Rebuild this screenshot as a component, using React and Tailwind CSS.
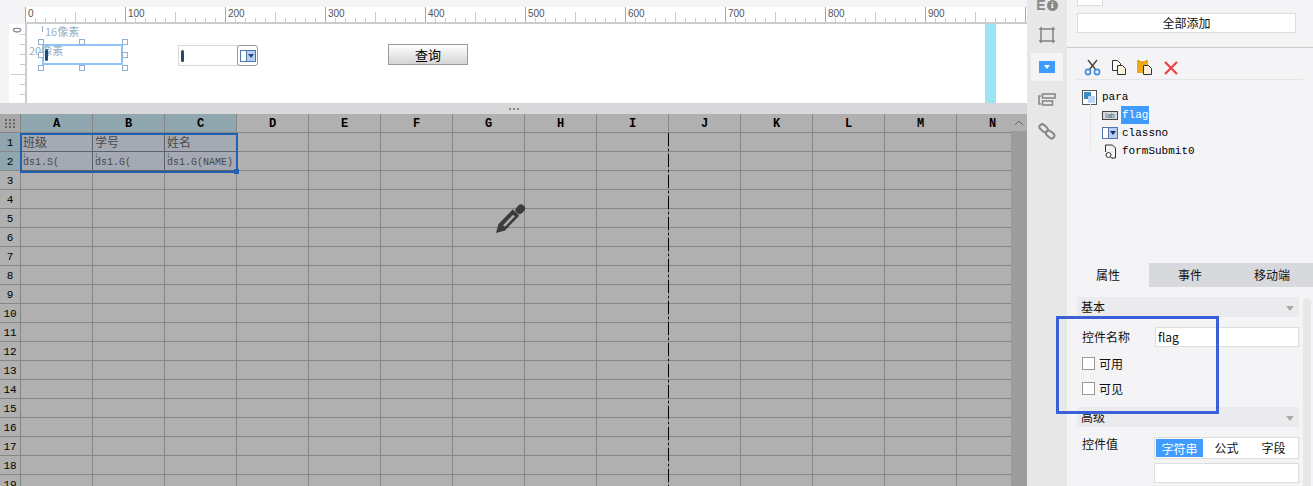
const COLS = ["A", "B", "C", "D", "E", "F", "G", "H", "I", "J", "K", "L", "M", "N"];
const ROWS = Array.from({ length: 19 }, (_, i) => i + 1);
const CELLS = {
  "A1": "班级", "B1": "学号", "C1": "姓名",
  "A2": "ds1.S(", "B2": "ds1.G(", "C2": "ds1.G(NAME)",
};
const MONO = "font-['Liberation_Mono','Noto_Sans_CJK_SC',monospace]";

const TopRuler = () => {
  const ticks = [];
  for (let x = 0; x <= 1000; x += 10) {
    const h = x % 100 === 0 ? 16 : x % 50 === 0 ? 11 : 5;
    ticks.push(<line key={x} x1={x + 0.5} x2={x + 0.5} y1={16 - h} y2={16} stroke={x % 100 === 0 ? "#aaa" : "#ccc"} />);
  }
  return (
    <div className="relative h-[17px] flex-1 overflow-hidden border-b-2 border-[#ccc] bg-white">
      <svg width="1002" height="16" className="block">{ticks}</svg>
      {[0, 100, 200, 300, 400, 500, 600, 700, 800, 900].map((n) => (
        <span key={n} style={{ left: n + 3 }} className="absolute top-[1px] text-[10px] leading-[12px] text-[#555] font-['Liberation_Sans',sans-serif]">{n}</span>
      ))}
    </div>
  );
};

const LeftRuler = () => (
  <div className="relative w-[18px] shrink-0 border-r-2 border-[#ccc] bg-white">
    <svg width="16" height="79" className="block">
      {[10, 20, 30, 40, 50, 60, 70].map((y) => (
        <line key={y} x1={y === 50 ? 2 : 11} x2="16" y1={y + 0.5} y2={y + 0.5} stroke="#ccc" />
      ))}
    </svg>
    <span className="absolute left-[4px] top-[0px] rotate-90 text-[10px] leading-[12px] text-[#555] font-['Liberation_Sans',sans-serif]">0</span>
  </div>
);

const Handle = ({ x, y }) => (
  <div style={{ left: x, top: y }} className="absolute h-[6px] w-[6px] border border-[#8fb0d0] bg-white" />
);

const ComboIcon = ({ dark }) => (
  <svg width="16" height="12" viewBox="0 0 16 12" className="block">
    <rect x="0.5" y="0.5" width="15" height="11" fill="#fff" stroke="#4f74b0" />
    <rect x="6.5" y="0.5" width="9" height="11" fill="#b9cff0" stroke="#4f74b0" />
    <path d="M8 4h6l-3 4z" fill={dark ? "#14306a" : "#2a4a80"} />
  </svg>
);

const Canvas = () => (
  <div className="relative flex-1 bg-white">
    <div className="absolute left-[958px] top-0 h-full w-[11px] bg-[#9ce4f4]" />
    <div className="absolute left-[15px] top-[2px] h-[6px] w-px bg-[#9ab0c8]" />
    <span className="absolute left-[18px] top-[0px] text-[11px] leading-[14px] text-[#9ab0c8] font-['Noto_Sans_CJK_SC',sans-serif]">16像素</span>
    <div className="absolute left-[15px] top-[20px] h-[21px] w-[81px] border-2 border-[#90c4f8]" />
    <span className="absolute left-[2px] top-[19px] text-[11px] leading-[14px] text-[#9ab0c8] font-['Noto_Sans_CJK_SC',sans-serif]">20像素</span>
    <div className="absolute left-[18px] top-[25px] h-[12px] w-[3px] rounded-sm bg-[#1a4a7a]" />
    <Handle x={11} y={15} />
    <Handle x={52} y={15} />
    <Handle x={95} y={15} />
    <Handle x={11} y={28} />
    <Handle x={95} y={28} />
    <Handle x={11} y={41} />
    <Handle x={52} y={41} />
    <Handle x={95} y={41} />
    <div className="absolute left-[151px] top-[21px] flex h-[21px] w-[60px] items-center border border-[#d8d8d8] pl-[2px]">
      <div className="h-[12px] w-[3px] rounded-sm bg-[#1a4a7a]" />
    </div>
    <div className="absolute left-[210px] top-[21px] flex h-[21px] w-[21px] items-center justify-center rounded-[3px] border border-[#999]">
      <ComboIcon />
    </div>
    <button className="absolute left-[361px] top-[20px] h-[21px] w-[80px] border border-[#999] bg-gradient-to-b from-white to-[#d4d4d4] text-[13px] leading-[19px] text-black font-['Noto_Sans_CJK_SC',sans-serif]">查询</button>
  </div>
);

const Sheet = () => (
  <div className="relative flex-1 overflow-hidden bg-[#b0b0b0]">
    <div className={`grid grid-cols-[21px_repeat(14,72px)] auto-rows-[19px] ${MONO}`}>
      <div className="flex items-center justify-center border-b border-r border-[#868686] bg-[#a8a8a8]">
        <svg width="11" height="9" fill="#666">
          {[0, 4, 8].map((x) => [0, 3.5, 7].map((y) => <rect key={`${x}${y}`} x={x} y={y} width="2" height="2" />))}
        </svg>
      </div>
      {COLS.map((c, i) => (
        <div key={c} className={`border-b border-r border-[#868686] text-center text-[12px] font-bold leading-[20px] text-black ${i < 3 ? "bg-[#8fa6ae]" : "bg-[#b0b0b0]"}`}>{c}</div>
      ))}
      {ROWS.map((r) => (
        <div key={r} className="contents">
          <div className={`border-b border-r border-[#868686] text-center text-[11px] leading-[20px] text-black ${r < 3 ? "bg-[#8fa6ae]" : "bg-[#b0b0b0]"}`}>{r}</div>
          {COLS.map((c, i) => {
            const on = r < 3 && i < 3;
            return (
              <div key={c} className={`relative overflow-hidden whitespace-nowrap border-b border-r pl-[2px] text-[#4a4a4a] ${on ? "border-[#5c6068] bg-[#a5a9b3]" : "border-[#868686]"} ${r === 1 ? "text-[12px] leading-[22px]" : "text-[10px] leading-[22px]"}`}>
                {r === 2 && on && (
                  <svg width="5" height="6" className="absolute left-[1px] top-[1px]" fill="none" stroke="#808890">
                    <path d="M2.5 0v5M0.5 3l2 2 2-2" />
                  </svg>
                )}
                {CELLS[c + r]}
              </div>
            );
          })}
        </div>
      ))}
    </div>
    {/* selection over A1:C2 */}
    <div className="absolute left-[20px] top-[19px] h-[40px] w-[218px] border-2 border-[#2060b0]" />
    <div className="absolute left-[234px] top-[55px] h-[5px] w-[5px] bg-[#2060b0]" />
    <svg width="3" height="372" className="absolute left-[667px] top-[19px]">
      <line x1="1.5" x2="1.5" y1="0" y2="372" stroke="#000" strokeWidth="1" strokeDasharray="13 3 2 3" />
    </svg>
    <svg width="32" height="32" className="absolute left-[495px] top-[89px]" fill="none">
      <path d="M1 30l2.5-9 6.5 6.5z" fill="#3c3c3c" />
      <path d="M6.5 24.5L21 9.5" stroke="#3c3c3c" strokeWidth="9" />
      <path d="M9 23L19 12.5" stroke="#b0b0b0" strokeWidth="2.5" />
      <path d="M24.5 7L26 5.5" stroke="#3c3c3c" strokeWidth="8" strokeLinecap="round" />
    </svg>
    <div className="absolute right-0 top-0 h-full w-[16px] bg-[#9c9c9c]">
      <div className="flex h-[17px] items-center justify-center bg-[#b0b0b0]">
        <svg width="10" height="6" fill="none" stroke="#666"><path d="M1 5l4-4 4 4" /></svg>
      </div>
    </div>
  </div>
);

const IconStrip = () => (
  <div className="flex w-[40px] shrink-0 flex-col items-center bg-[#e8e8e8]">
    <div className="-mt-[3px] flex h-[16px] items-center gap-px">
      <span className="text-[14px] font-bold leading-none text-[#888] font-['Liberation_Sans',sans-serif]">E</span>
      <span className="flex h-[11px] w-[11px] items-center justify-center rounded-full bg-[#888] text-[9px] font-bold leading-none text-white font-['Liberation_Serif',serif]">i</span>
    </div>
    <svg width="16" height="16" className="mt-[14px]" fill="none" stroke="#888">
      <rect x="2" y="2" width="12" height="12" strokeWidth="1.6" />
      <path d="M0 2h3M13 2h3M0 14h3M13 14h3M2 0v3M14 0v3M2 13v3M14 13v3" strokeWidth="1.6" />
    </svg>
    <div className="mt-[10px] flex h-[28px] w-[32px] items-center justify-center bg-[#f4f4f6]">
      <div className="flex h-[12px] w-[16px] items-center justify-center bg-[#3f9cff]">
        <svg width="6" height="4"><path d="M0 0h6l-3 4z" fill="#fff" /></svg>
      </div>
    </div>
    <svg width="18" height="13" className="mt-[12px]" fill="none" stroke="#888" strokeWidth="1.6">
      <path d="M3 3H1v8h2" />
      <rect x="4.5" y="1" width="12.5" height="4" />
      <rect x="4.5" y="8" width="10" height="4" />
    </svg>
    <svg width="18" height="18" viewBox="0 0 18 18" className="mt-[16px]" fill="none" stroke="#888" strokeWidth="2">
      <rect x="1" y="3" width="9" height="5.5" rx="2.7" transform="rotate(40 5 6)" />
      <rect x="8" y="9.5" width="9" height="5.5" rx="2.7" transform="rotate(40 12 12)" />
    </svg>
  </div>
);

const Toolbar = () => (
  <div className="mx-[10px] flex h-[32px] w-[226px] items-end gap-[10px] border-b border-[#e4e4e4] pb-[3px] pl-[7px]">
    <svg width="17" height="17" fill="none">
      <path d="M4 1l8 10M13 1L5 11" stroke="#444" strokeWidth="1.4" />
      <circle cx="4" cy="13" r="2.6" stroke="#3c8ee0" strokeWidth="1.6" />
      <circle cx="13" cy="13" r="2.6" stroke="#3c8ee0" strokeWidth="1.6" />
    </svg>
    <svg width="16" height="17" stroke="#333">
      <path d="M1.5 1.5h5l3 3v7h-8z" fill="#fff" />
      <path d="M6.5 6.5h5l3 3v6h-8z" fill="#fdf3dc" />
    </svg>
    <svg width="16" height="17" stroke="#333">
      <rect x="0" y="1" width="11" height="13" fill="#f0a818" stroke="none" />
      <rect x="3" y="0" width="5" height="2" fill="#fff" stroke="none" />
      <path d="M6.5 6.5h5l3 3v6h-8z" fill="#fdf3dc" />
    </svg>
    <svg width="14" height="14" className="mb-[1px] ml-[1px]" fill="none" stroke="#ee4040" strokeWidth="2.2">
      <path d="M1 1l12 12M13 1L1 13" />
    </svg>
  </div>
);

const Tree = () => (
  <div className={`relative mt-[8px] ml-[15px] text-[11px] leading-[18px] text-black ${MONO}`}>
    <div className="absolute left-[8px] top-[16px] h-[46px] w-px bg-[#e8e8e8]" />
    <div className="flex h-[18px] items-center gap-[5px]">
      <svg width="15" height="15">
        <rect x="0.5" y="0.5" width="14" height="14" fill="#fff" stroke="#555" />
        <rect x="2" y="2" width="7" height="7" fill="#3a8cc8" />
        <rect x="6" y="6" width="7" height="7" fill="#b9d4f4" />
      </svg>
      <span>para</span>
    </div>
    <div className="ml-[20px] flex h-[18px] items-center gap-[3px]">
      <span className="flex h-[9px] w-[16px] items-center justify-center border border-[#444] bg-[#d8d8d8] text-[7px] leading-none text-[#555] font-['Liberation_Sans',sans-serif]">lab</span>
      <span className="bg-[#3f9cff] px-px text-white">flag</span>
    </div>
    <div className="ml-[20px] flex h-[18px] items-center gap-[4px]">
      <ComboIcon dark />
      <span>classno</span>
    </div>
    <div className="ml-[22px] flex h-[18px] items-center gap-[5px]">
      <svg width="13" height="15" fill="none" stroke="#333">
        <path d="M1.5 8V1h7l3 3v10H8" />
        <circle cx="4.5" cy="11" r="2.5" />
        <path d="M6.5 13l2 1.5" />
      </svg>
      <span>formSubmit0</span>
    </div>
  </div>
);

const SectionBar = ({ title }) => (
  <div className="flex h-[20px] w-[222px] items-center justify-between bg-[#ebebed] pl-[4px] pr-[5px] text-[12px]">
    <span>{title}</span>
    <svg width="8" height="5" className="mt-[2px]"><path d="M0 0h8l-4 5z" fill="#aaa" /></svg>
  </div>
);

const Check = ({ label }) => (
  <div className="flex h-[25px] items-center gap-[4px] pl-[5px] text-[12px]">
    <div className="h-[13px] w-[13px] border border-[#999] bg-white" />
    <span>{label}</span>
  </div>
);

const RightPanel = () => (
  <div className="flex w-[246px] shrink-0 flex-col overflow-hidden bg-[#f4f4f6] text-[#111] font-['Noto_Sans_CJK_SC',sans-serif]">
    <div className="ml-[10px] h-[6px] w-[26px] border-x border-b border-[#ddd] bg-white" />
    <button className="ml-[10px] mt-[7px] h-[20px] w-[219px] border border-[#ddd] bg-white text-[12px] leading-[18px]">全部添加</button>
    <div className="mt-[14px] h-px bg-[#ccc]" />
    <Toolbar />
    <Tree />
    <div className="mt-[103px] flex h-[24px] text-[12px] leading-[24px]">
      <div className="w-[82px] text-center">属性</div>
      <div className="w-[82px] bg-[#d8d9dd] text-center">事件</div>
      <div className="flex-1 bg-[#d8d9dd] text-center">移动端</div>
    </div>
    <div className="relative flex-1 pl-[10px] pt-[10px]">
      <div className="absolute right-[2px] top-[11px] h-[188px] w-[8px] rounded-t bg-[#e8e8e8]" />
      <SectionBar title="基本" />
      <div className="mt-[10px] flex h-[20px] items-center pl-[5px] text-[12px]">
        <span className="w-[73px]">控件名称</span>
        <div className="flex h-[20px] w-[144px] items-center border border-[#ddd] bg-white pl-[2px]">flag</div>
      </div>
      <div className="mt-[4px]">
        <Check label="可用" />
        <Check label="可见" />
      </div>
      <div className="mt-[6px]"><SectionBar title="高级" /></div>
      <div className="mt-[10px] flex pl-[5px] text-[12px]">
        <span className="w-[72px] leading-[14px]">控件值</span>
        <div className="flex h-[22px] w-[145px] items-center border border-[#ddd] bg-white p-px text-center">
          <span className="h-full w-[47px] bg-[#3f9cff] leading-[19px] text-white">字符串</span>
          <span className="w-[47px]">公式</span>
          <span className="w-[47px]">字段</span>
        </div>
      </div>
      <div className="ml-[77px] mt-[4px] h-[20px] w-[145px] border border-[#ddd] bg-white" />
    </div>
  </div>
);

export default function App() {
  return (
    <div className="relative flex h-[486px] w-[1313px] overflow-hidden bg-[#f4f4f6]">
      <div className="flex w-[1027px] shrink-0 flex-col">
        <div className="h-[7px] shrink-0 bg-[#f4f4f6]" />
        <div className="flex h-[17px] shrink-0 pl-[25px]"><TopRuler /></div>
        <div className="flex h-[79px] shrink-0 pl-[9px]">
          <LeftRuler />
          <Canvas />
        </div>
        <div className="flex h-[11px] shrink-0 items-center justify-center gap-[2px] bg-[#d8d8da]">
          <i className="h-[2px] w-[2px] bg-[#888]" />
          <i className="h-[2px] w-[2px] bg-[#888]" />
          <i className="h-[2px] w-[2px] bg-[#888]" />
        </div>
        <Sheet />
      </div>
      <IconStrip />
      <RightPanel />
      {/* annotation rectangle drawn over the properties */}
      <div className="absolute left-[1056px] top-[316px] h-[98px] w-[163px] border-[3px] border-[#3b5fd6]" />
    </div>
  );
}
